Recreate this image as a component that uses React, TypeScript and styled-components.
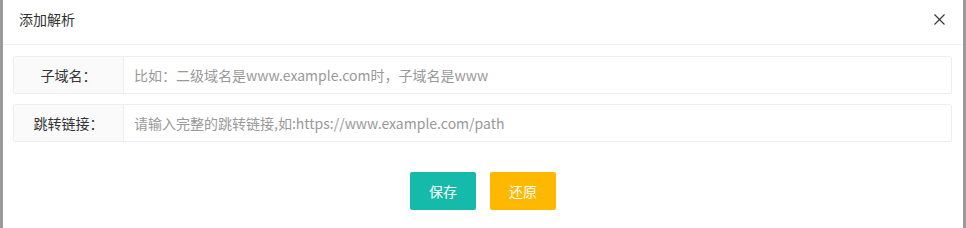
import styled, { createGlobalStyle } from 'styled-components';

const GlobalStyle = createGlobalStyle`
html, body {
	margin: 0;
	padding: 0;
	background: #9a9a9a;
}
body {
	font-family: "Microsoft YaHei", "Noto Sans CJK SC", "Liberation Sans", sans-serif;
	font-size: 14px;
	color: #333;
}
`;

const Fields = [
	{ label: '子域名：', placeholder: '比如：二级域名是www.example.com时，子域名是www' },
	{ label: '跳转链接：', placeholder: '请输入完整的跳转链接,如:https://www.example.com/path' },
];

const CloseIcon = () => (
	<svg width="11" height="11" viewBox="0 0 11 11">
		<path d="M0.5 0.5 L10.5 10.5 M10.5 0.5 L0.5 10.5" stroke="#333" strokeWidth="1.1" fill="none" />
	</svg>
);

const App = () => {
	return (
		<Page>
			<GlobalStyle />
			<Dialog>
				<TitleBar>
					<span>添加解析</span>
					<CloseButton type="button" aria-label="关闭">
						<CloseIcon />
					</CloseButton>
				</TitleBar>
				<Form onSubmit={(e) => e.preventDefault()}>
					{Fields.map((f) => (
						<FormItem key={f.label}>
							<Label>{f.label}</Label>
							<Input placeholder={f.placeholder} />
						</FormItem>
					))}
					<Actions>
						<Btn type="submit" $color="#16baaa">保存</Btn>
						<Btn type="reset" $color="#ffb800">还原</Btn>
					</Actions>
				</Form>
			</Dialog>
		</Page>
	);
};

const Page = styled.div`
height: 228px;
padding: 0 3px 0 3px;
box-sizing: border-box;
overflow: hidden;
`;

const Dialog = styled.div`
width: 960px;
height: 228px;
background: #fff;
`;

const TitleBar = styled.div`
height: 45px;
box-sizing: border-box;
border-bottom: 1px solid #f0f0f0;
display: flex;
align-items: flex-start;
justify-content: space-between;
padding: 10px 18px 0 16px;
font-size: 14px;
line-height: 19px;
color: #333;
`;

const CloseButton = styled.button`
border: 0;
background: none;
padding: 0;
margin-top: 4px;
width: 11px;
height: 11px;
display: flex;
cursor: pointer;
`;

const Form = styled.form`
padding: 11px 11px 0 10px;
display: flex;
flex-direction: column;
gap: 10px;
`;

const FormItem = styled.div`
display: flex;
height: 38px;
box-sizing: border-box;
border: 1px solid #eee;
border-radius: 2px;
`;

const Label = styled.label`
width: 109px;
flex-shrink: 0;
background: #fafafa;
border-right: 1px solid #eee;
text-align: center;
line-height: 36px;
font-size: 14px;
color: #333;
`;

const Input = styled.input`
flex: 1;
border: 0;
outline: none;
padding: 0 10px;
font-family: inherit;
font-size: 14px;
color: #333;
&::placeholder {
	color: #999;
}
`;

const Actions = styled.div`
display: flex;
justify-content: center;
gap: 14px;
margin-top: 20px;
padding-left: 1px;
`;

const Btn = styled.button<{ $color: string }>`
height: 38px;
width: 66px;
border: 0;
border-radius: 2px;
background: ${(p) => p.$color};
color: #fff;
font-family: inherit;
font-size: 14px;
cursor: pointer;
`;

export default App;
